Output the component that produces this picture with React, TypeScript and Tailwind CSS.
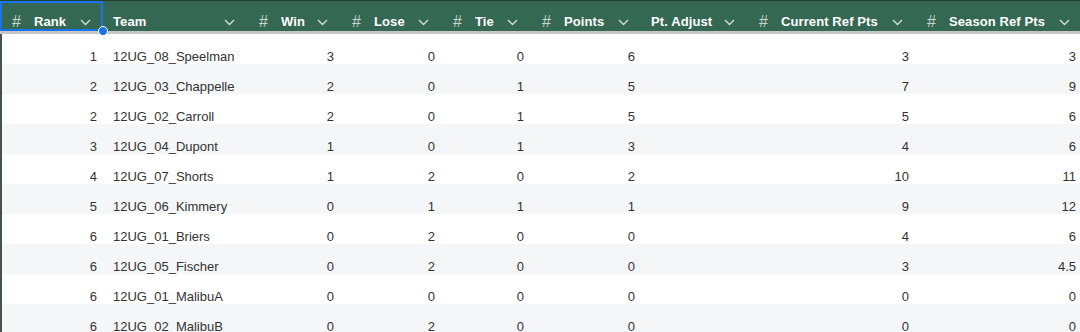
import React from "react";

type Col = { key: string; label: string; num: boolean };

const cols: Col[] = [
  { key: "rank", label: "Rank", num: true },
  { key: "team", label: "Team", num: false },
  { key: "win", label: "Win", num: true },
  { key: "lose", label: "Lose", num: true },
  { key: "tie", label: "Tie", num: true },
  { key: "points", label: "Points", num: true },
  { key: "adjust", label: "Pt. Adjust", num: false },
  { key: "cur", label: "Current Ref Pts", num: true },
  { key: "season", label: "Season Ref Pts", num: true },
];

const rows: string[][] = [
  ["1", "12UG_08_Speelman", "3", "0", "0", "6", "", "3", "3"],
  ["2", "12UG_03_Chappelle", "2", "0", "1", "5", "", "7", "9"],
  ["2", "12UG_02_Carroll", "2", "0", "1", "5", "", "5", "6"],
  ["3", "12UG_04_Dupont", "1", "0", "1", "3", "", "4", "6"],
  ["4", "12UG_07_Shorts", "1", "2", "0", "2", "", "10", "11"],
  ["5", "12UG_06_Kimmery", "0", "1", "1", "1", "", "9", "12"],
  ["6", "12UG_01_Briers", "0", "2", "0", "0", "", "4", "6"],
  ["6", "12UG_05_Fischer", "0", "2", "0", "0", "", "3", "4.5"],
  ["6", "12UG_01_MalibuA", "0", "0", "0", "0", "", "0", "0"],
  ["6", "12UG_02_MalibuB", "0", "2", "0", "0", "", "0", "0"],
];

const grid = "grid grid-cols-[103px_144px_93px_101px_89px_111px_106px_168px_167px]";

function Chevron() {
  return (
    <svg width="11" height="7" viewBox="0 0 11 7" className="shrink-0">
      <polyline points="1,1 5.5,5.5 10,1" fill="none" stroke="#d3ddd8" strokeWidth="1.4" />
    </svg>
  );
}

function HeaderCell({ col, selected }: { col: Col; selected?: boolean }) {
  return (
    <div className="relative flex h-[30px] items-center pt-[12px] pr-[12px]">
      {col.num ? (
        <span className="w-[34px] shrink-0 pl-[12px] text-[16px] font-normal leading-[16px] text-[#c9d5cf]">#</span>
      ) : (
        <span className="w-[10px] shrink-0" />
      )}
      <span className="flex-1 truncate text-[13px] font-bold leading-[16px] tracking-[0.1px] text-white">{col.label}</span>
      <Chevron />
      {selected && (
        <>
          <div className="pointer-events-none absolute inset-0 border-2 border-[#1a73e8]" />
          <div className="absolute -bottom-[5px] -right-[5px] z-10 h-[10px] w-[10px] rounded-full border border-white bg-[#1a73e8]" />
        </>
      )}
    </div>
  );
}

export default function App() {
  return (
    <div className="h-[332px] w-[1080px] overflow-hidden bg-white font-['Liberation_Sans',Arial,sans-serif]">
      <div className="border-t border-[#22402f] bg-[#356853]">
        <div className={grid}>
          {cols.map((c, i) => (
            <HeaderCell key={c.key} col={c} selected={i === 0} />
          ))}
        </div>
      </div>
      <div className="h-[3px] bg-[#c6c6c6]" />
      <div className="border-l-2 border-[#46524c]">
        {rows.map((r, ri) => (
          <div key={ri} className={`${grid} h-[30px] ${ri % 2 === 1 ? "bg-[#f5f6f8]" : "bg-white"}`}>
            {r.map((v, ci) => (
              <div
                key={ci}
                className={`pt-[15px] text-[13px] leading-[16px] text-[#333333] ${
                  cols[ci].num ? "pr-[8px] text-right" : "pl-[8px] text-left"
                } ${ci === 0 ? "-ml-[2px]" : ""}`}
              >
                {v}
              </div>
            ))}
          </div>
        ))}
      </div>
    </div>
  );
}
